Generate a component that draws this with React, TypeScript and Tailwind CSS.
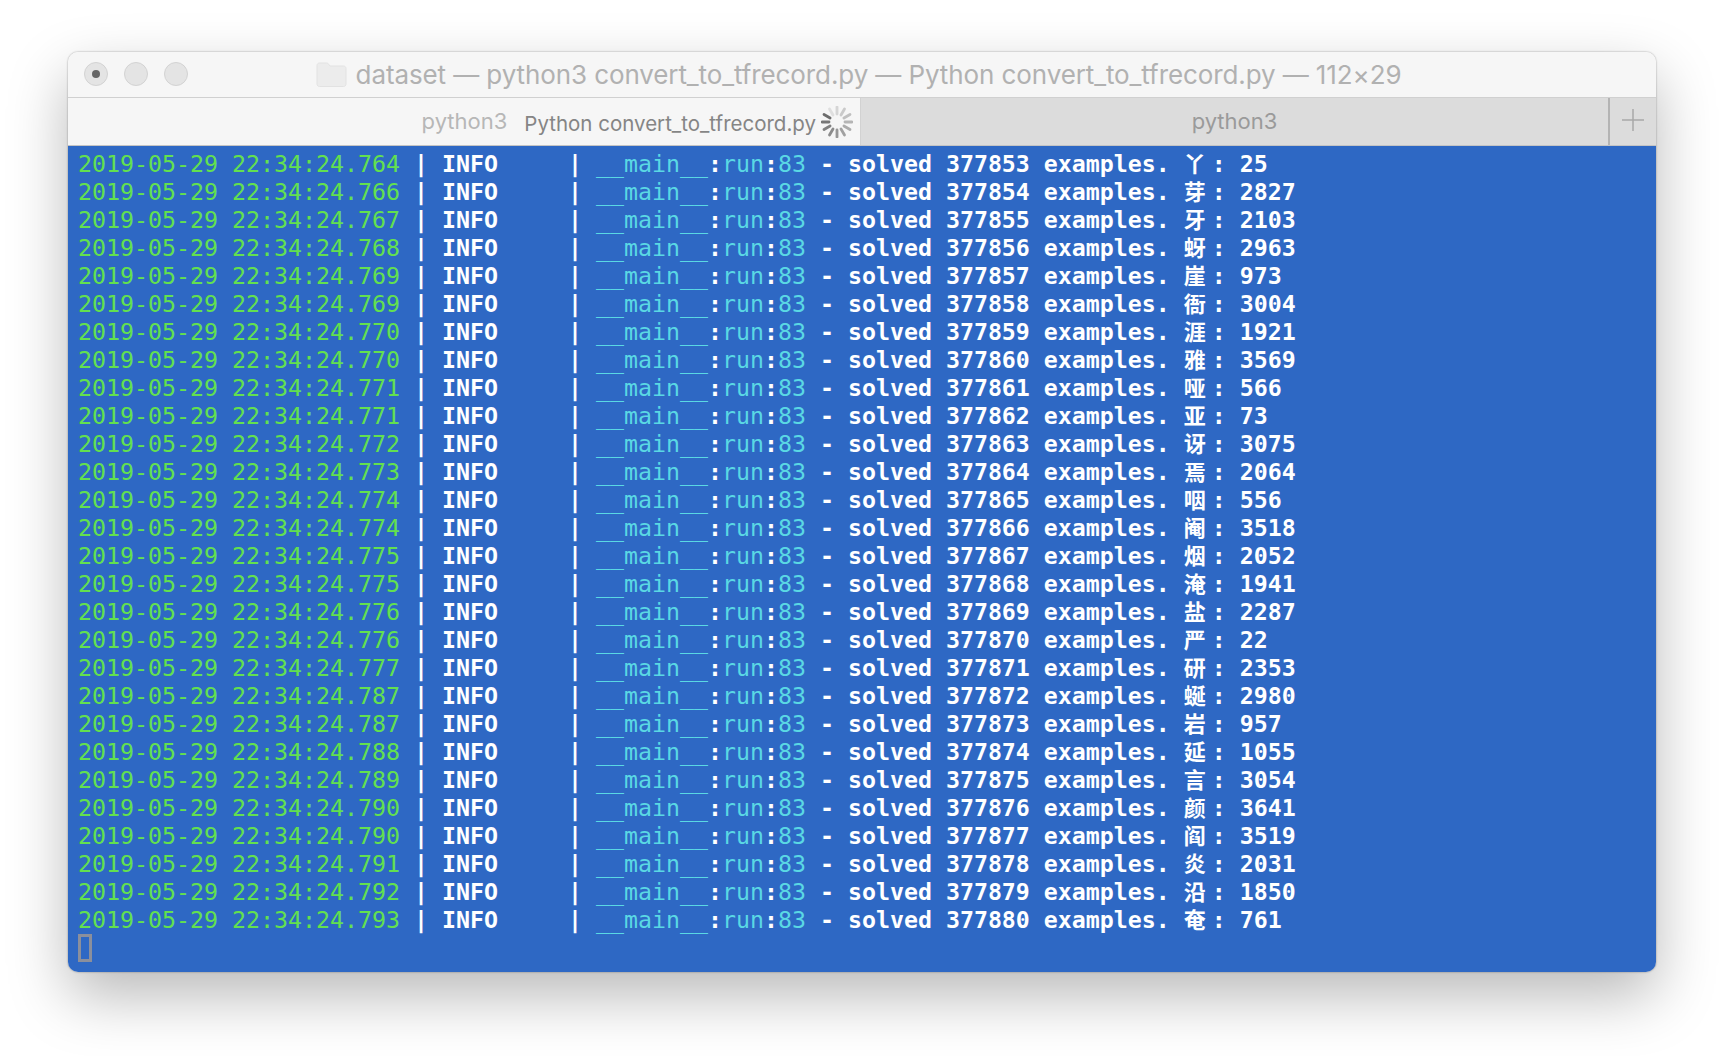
const rows: [string, number, string, number][] = [
  ["764", 377853, "丫", 25],
  ["766", 377854, "芽", 2827],
  ["767", 377855, "牙", 2103],
  ["768", 377856, "蚜", 2963],
  ["769", 377857, "崖", 973],
  ["769", 377858, "衙", 3004],
  ["770", 377859, "涯", 1921],
  ["770", 377860, "雅", 3569],
  ["771", 377861, "哑", 566],
  ["771", 377862, "亚", 73],
  ["772", 377863, "讶", 3075],
  ["773", 377864, "焉", 2064],
  ["774", 377865, "咽", 556],
  ["774", 377866, "阉", 3518],
  ["775", 377867, "烟", 2052],
  ["775", 377868, "淹", 1941],
  ["776", 377869, "盐", 2287],
  ["776", 377870, "严", 22],
  ["777", 377871, "研", 2353],
  ["787", 377872, "蜒", 2980],
  ["787", 377873, "岩", 957],
  ["788", 377874, "延", 1055],
  ["789", 377875, "言", 3054],
  ["790", 377876, "颜", 3641],
  ["790", 377877, "阎", 3519],
  ["791", 377878, "炎", 2031],
  ["792", 377879, "沿", 1850],
  ["793", 377880, "奄", 761],
]

function Spinner() {
  return (
    <svg width="32" height="32" viewBox="-16 -16 32 32" className="shrink-0">
      {Array.from({ length: 12 }).map((_, i) => {
        // darkest spoke sits at 10 o'clock, fading counter-clockwise
        const opacity = 0.85 - i * 0.065
        return (
          <line
            key={i}
            x1="0"
            y1="-8"
            x2="0"
            y2="-15"
            stroke="#555"
            strokeWidth="2.8"
            strokeLinecap="round"
            opacity={opacity}
            transform={`rotate(${-60 - i * 30})`}
          />
        )
      })}
    </svg>
  )
}

function FolderIcon() {
  return (
    <svg width="31" height="25" viewBox="0 0 31 25" className="shrink-0">
      <path
        d="M1 3.5C1 2 2 1 3.5 1h7c1 0 1.6.4 2.2 1.2L14 4h13.5C29 4 30 5 30 6.500V22c0 1.500-1 2.500-2.500 2.500h-24C2 24.500 1 23.500 1 22Z"
        fill="#ececec"
        stroke="#e2e2e2"
      />
    </svg>
  )
}

function LogRow({ ms, n, ch, count }: { ms: string; n: number; ch: string; count: number }) {
  return (
    <div className="h-[28px] whitespace-pre">
      <span className="text-[#63e04f]">{`2019-05-29 22:34:24.${ms}`}</span>
      <span className="font-bold"> | INFO     | </span>
      <span className="text-[#5ad8e4]">__main__</span>
      <span className="font-bold">:</span>
      <span className="text-[#5ad8e4]">run</span>
      <span className="font-bold">:</span>
      <span className="text-[#5ad8e4]">83</span>
      <span className="font-bold">{` - solved ${n} examples. `}</span>
      <span className="inline-block w-[28px] font-['Noto_Sans_CJK_SC',sans-serif] text-[22px] font-bold">{ch}</span>
      <span className="font-bold">{`: ${count}`}</span>
    </div>
  )
}

export default function App() {
  return (
    <div className="h-[1056px] w-[1724px] overflow-hidden bg-white pl-[68px] pt-[52px]">
      <div className="w-[1588px] overflow-hidden rounded-[10px] shadow-[0_24px_60px_rgba(0,0,0,0.28),0_0_2px_rgba(0,0,0,0.4)]">
        {/* title bar */}
        <div className="relative flex h-[46px] items-center justify-center gap-[9px] border-b border-[#d0d0d0] bg-[#f6f6f6] pr-[7px] font-['Inter',sans-serif] text-[26px] text-[#b1b1b1]">
          <div className="absolute left-[16px] top-[10px] flex gap-[16px]">
            <div className="flex h-[24px] w-[24px] items-center justify-center rounded-full border border-[#d2d2d2] bg-[#e4e4e4]">
              <div className="h-[8px] w-[8px] rounded-full bg-[#666]" />
            </div>
            <div className="h-[24px] w-[24px] rounded-full border border-[#d2d2d2] bg-[#e4e4e4]" />
            <div className="h-[24px] w-[24px] rounded-full border border-[#d2d2d2] bg-[#e4e4e4]" />
          </div>
          <FolderIcon />
          <span className="whitespace-pre tracking-[-0.1px]">dataset — python3 convert_to_tfrecord.py — Python convert_to_tfrecord.py — 112×29</span>
        </div>

        {/* tabs */}
        <div className="flex h-[48px] border-b border-[#c4c4c4] font-['Inter',sans-serif]">
          <div className="flex w-[792px] shrink-0 items-center justify-end bg-[#f6f6f6] pr-[7px]">
            <span className="mb-[1px] text-[22px] text-[#b7b7b7]">python3</span>
            <span className="ml-[17px] mt-[5px] text-[20.5px] text-[#858585]">Python convert_to_tfrecord.py</span>
            <div className="ml-[5px]"><Spinner /></div>
          </div>
          <div className="flex flex-1 items-center justify-center border-l border-[#d2d2d2] bg-[#dcdcdc] text-[22px] text-[#9a9a9a]">
            <span className="mb-[1px]">python3</span>
          </div>
          <div className="flex w-[48px] shrink-0 items-center justify-center border-l-2 border-[#b4b4b4] bg-[#dcdcdc]">
            <svg width="24" height="24" viewBox="0 0 24 24" className="mb-[3px]">
              <path d="M12 1v22M1 12h22" stroke="#a8a8a8" strokeWidth="1.500" />
            </svg>
          </div>
        </div>

        {/* terminal */}
        <div className="h-[826px] bg-[#2e68c4] pl-[10px] pt-[2px] font-['DejaVu_Sans_Mono',monospace] text-[23.26px] leading-[28px] text-white">
          {rows.map(([ms, n, ch, count]) => (
            <LogRow key={n} ms={ms} n={n} ch={ch} count={count} />
          ))}
          <div className="mt-[2px] h-[28px] w-[14px] border-[3px] border-[#8b8f9c]" />
        </div>
      </div>
    </div>
  )
}
